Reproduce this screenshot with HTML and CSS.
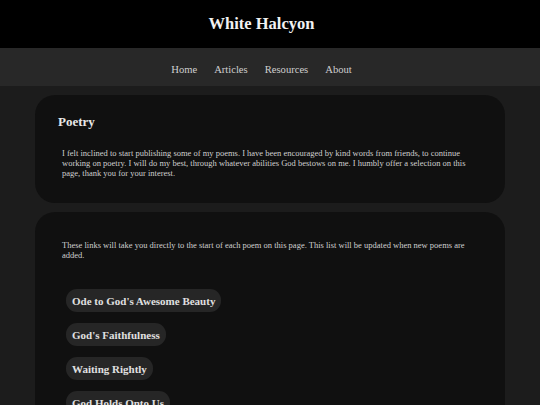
FILE: index.html
```html
<!DOCTYPE html>
<html>
<head>
<meta name="viewport" content="width=device-width, initial-scale=1">
<link rel="stylesheet" href="styles.css">
</head>
<body>

<header class="site-header">
  <h1>White Halcyon</h1>
</header>

<nav class="site-nav">
  <a href="#">Home</a>
  <a href="#">Articles</a>
  <a href="#">Resources</a>
  <a href="#">About</a>
</nav>

<main class="page">
  <section class="card">
    <h2>Poetry</h2>
    <p>I felt inclined to start publishing some of my poems. I have been encouraged by kind words from friends, to continue working on poetry. I will do my best, through whatever abilities God bestows on me. I humbly offer a selection on this page, thank you for your interest.</p>
  </section>

  <section class="card card-links">
    <p>These links will take you directly to the start of each poem on this page. This list will be updated when new poems are added.</p>
    <div class="poem-links">
      <a href="#ode" class="pill">Ode to God's Awesome Beauty</a>
      <a href="#faithfulness" class="pill">God's Faithfulness</a>
      <a href="#waiting" class="pill">Waiting Rightly</a>
      <a href="#holds" class="pill">God Holds Onto Us</a>
    </div>
  </section>
</main>

</body>
</html>
```

FILE: styles.css
```css
body {
    margin: 0;
    background-color: #1c1c1c;
    font-family: "Liberation Serif", "Times New Roman", serif;
    color: #cfcfcf;
}

.site-header {
    background-color: #000;
    height: 48px;
    display: flex;
    align-items: center;
    justify-content: center;
    padding-right: 17px;
}

.site-header h1 {
    margin: 0;
    font-size: 16.5px;
    color: #f2f2f2;
}

.site-nav {
    background-color: #282828;
    height: 38px;
    display: flex;
    align-items: center;
    justify-content: center;
    padding-top: 4px;
    box-sizing: border-box;
}

.site-nav a {
    color: #cfcfcf;
    text-decoration: none;
    font-size: 10.6px;
    margin-right: 17px;
}

.page {
    padding: 9px 35px;
    display: flex;
    flex-direction: column;
    gap: 9px;
}

.card {
    background-color: #101010;
    border-radius: 20px;
    padding: 19px 23px 25px;
}

.card h2 {
    margin: 0 0 18px;
    font-size: 13px;
    color: #e8e8e8;
}

.card p {
    margin: 0 4px;
    font-size: 8.5px;
    line-height: 10px;
}

.card-links {
    padding-top: 28px;
}

.poem-links {
    display: flex;
    flex-direction: column;
    align-items: flex-start;
    gap: 11px;
    margin: 29px 8px 0;
}

.pill {
    background-color: #262626;
    color: #e0e0e0;
    font-weight: bold;
    font-size: 11px;
    line-height: 12px;
    text-decoration: none;
    padding: 5.5px 6px;
    border-radius: 11px;
}
```
